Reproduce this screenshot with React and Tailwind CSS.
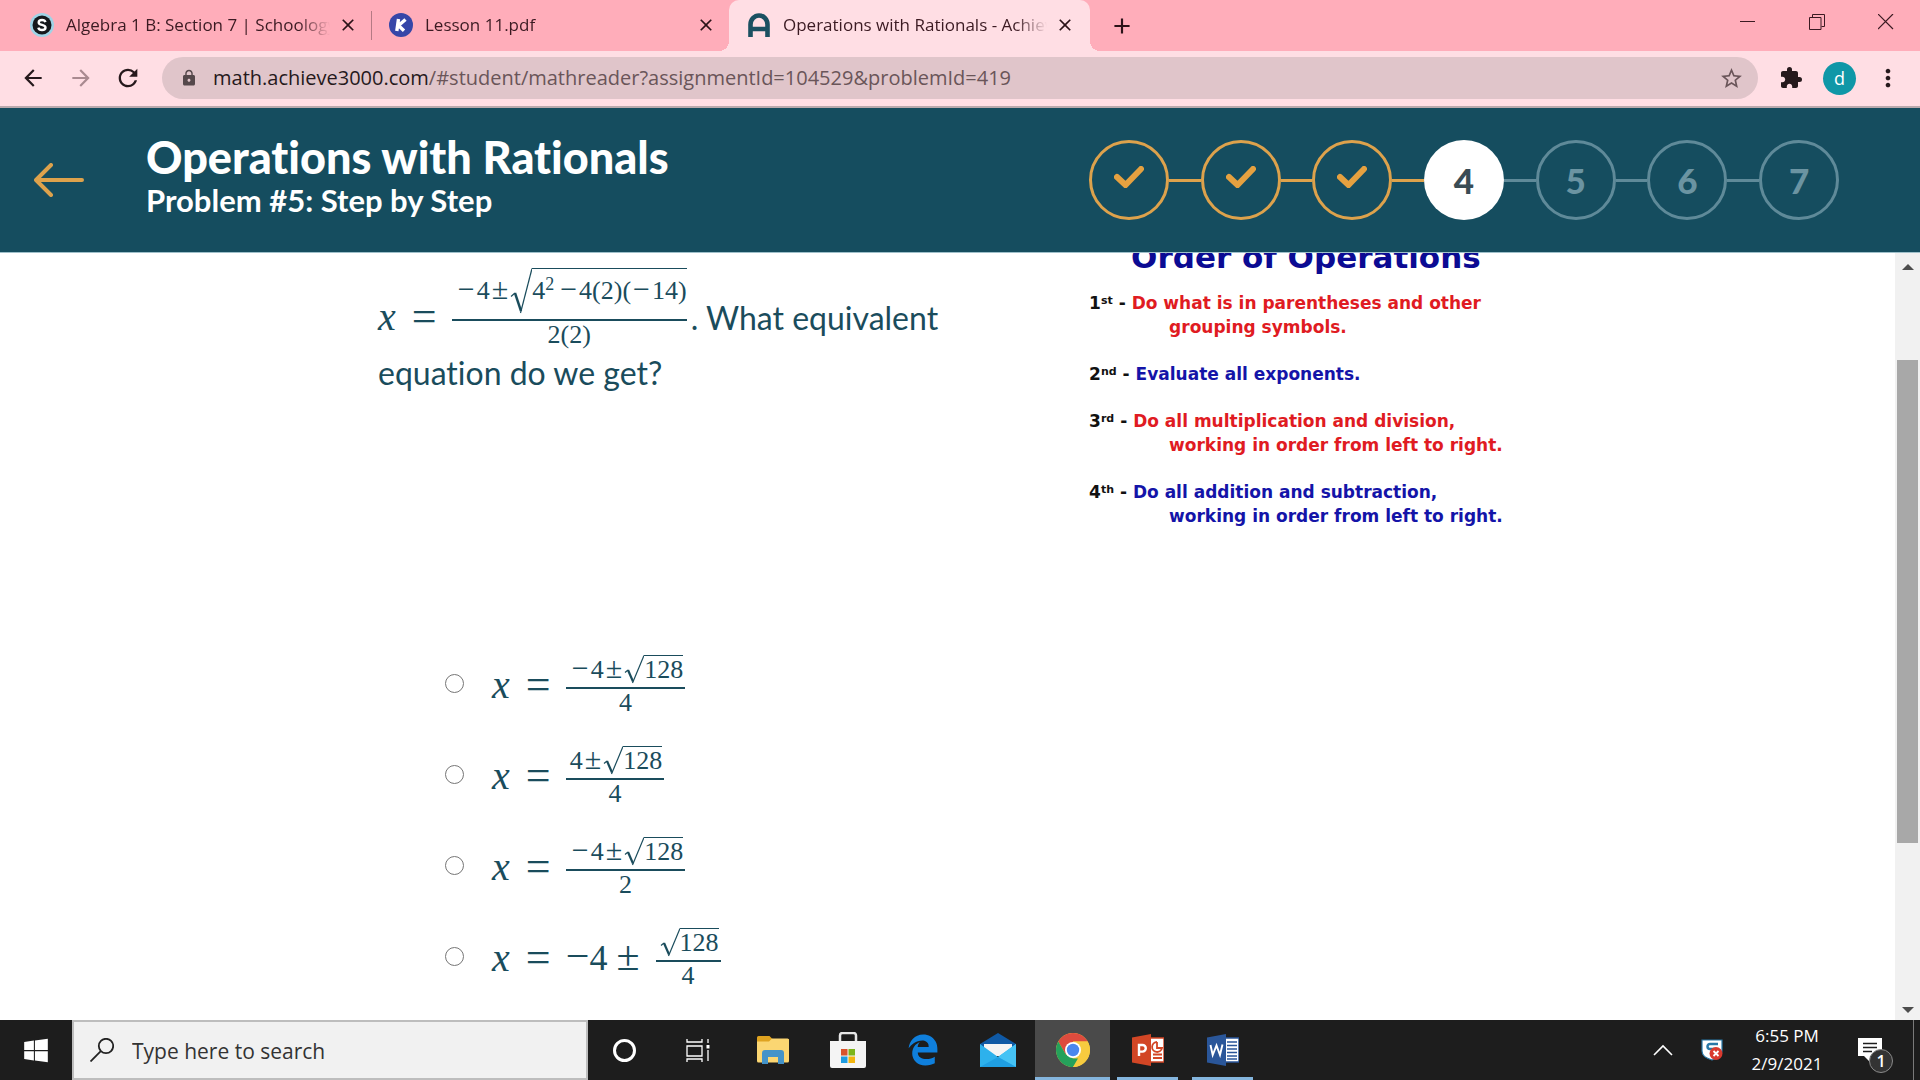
import React from 'react';
import {
  MdAdd,
  MdArrowBack,
  MdArrowForward,
  MdClose,
  MdExtension,
  MdLock,
  MdMoreVert,
  MdRefresh,
  MdStarBorder,
} from 'react-icons/md';
import { FaEdgeLegacy, FaWindows } from 'react-icons/fa6';

/* ---------- Browser window ---------- */

function SchoologyIcon() {
  return (
    <svg viewBox="0 0 24 24" className="w-6 h-6 shrink-0">
      <circle cx="12" cy="12" r="12" fill="#9fd3e6" />
      <circle cx="12" cy="12" r="9.5" fill="#15181c" />
      <path d="M15.5 9.2C15 7.600 13.700 7 12 7c-2 0-3.300.9-3.300 2.400 0 3.200 6.800 1.700 6.800 5 0 1.600-1.500 2.600-3.500 2.600-1.900 0-3.200-.8-3.700-2.400" fill="none" stroke="#fff" strokeWidth="2.400" />
    </svg>
  );
}

function KamiIcon() {
  return (
    <svg viewBox="0 0 24 24" className="w-6 h-6 shrink-0">
      <circle cx="12" cy="12" r="12" fill="#3646a8" />
      <path d="M9.500 6 7.800 18M16.500 6.500 9.500 12.500l5.500 5.200" fill="none" stroke="#fff" strokeWidth="3.400" />
    </svg>
  );
}

function AchieveIcon() {
  return (
    <svg viewBox="0 0 24 24" className="w-6 h-6 shrink-0">
      <path d="M3.500 24V11.500a8.500 9 0 0 1 17 0V24M3.500 16h17" fill="none" stroke="#1b5061" strokeWidth="4.600" />
    </svg>
  );
}

function Tab({ icon, title, className }) {
  return (
    <div className={`flex items-center h-full pb-px text-[17px] text-[#3b1a22] ${className}`}>
      {icon}
      <span className="flex-1 ml-3 overflow-hidden whitespace-nowrap [mask-image:linear-gradient(to_right,black_88%,transparent)]">
        {title}
      </span>
      <button aria-label="Close tab" className="ml-2 text-[#2b1218]">
        <MdClose className="w-5 h-5" />
      </button>
    </div>
  );
}

function TabStrip() {
  return (
    <div className="flex items-stretch h-[51px] bg-[#ffadba]">
      <Tab icon={<SchoologyIcon />} title="Algebra 1 B: Section 7 | Schoology" className="w-[371px] pl-[30px] pr-[13px]" />
      <div className="w-px my-[11px] bg-[#b57a84]" />
      <Tab icon={<KamiIcon />} title="Lesson 11.pdf" className="w-[357px] pl-[17px] pr-[13px]" />
      <div className="relative w-[361px] bg-[#ffdee4] rounded-t-[10px]">
        <span className="absolute bottom-0 -left-[10px] w-[10px] h-[10px] bg-[radial-gradient(circle_at_0_0,transparent_10px,#ffdee4_10px)]" />
        <Tab icon={<AchieveIcon />} title="Operations with Rationals - Achieve3000" className="pl-[18px] pr-[15px]" />
        <span className="absolute bottom-0 -right-[10px] w-[10px] h-[10px] bg-[radial-gradient(circle_at_100%_0,transparent_10px,#ffdee4_10px)]" />
      </div>
      <button aria-label="New tab" className="ml-[19px] text-[#2b1218]">
        <MdAdd className="w-[26px] h-[26px]" />
      </button>
      <div className="flex items-center gap-[53px] ml-auto mr-[26px] pb-2 text-[#3b1a22]">
        <button aria-label="Minimize">
          <svg viewBox="0 0 16 16" className="w-4 h-4"><path d="M0 7.500h15" stroke="currentColor" /></svg>
        </button>
        <button aria-label="Restore">
          <svg viewBox="0 0 16 16" className="w-4 h-4"><path d="M.5 3.500h11.500v12H.5zM3.500 3V.500h12v12H12.500" fill="none" stroke="currentColor" /></svg>
        </button>
        <button aria-label="Close">
          <svg viewBox="0 0 16 16" className="w-4 h-4"><path d="m0 0 15 15M15 0 0 15" stroke="currentColor" strokeWidth="1.200" /></svg>
        </button>
      </div>
    </div>
  );
}

function Toolbar() {
  return (
    <div className="flex items-center h-[57px] pb-px pl-5 pr-[18px] bg-[#ffdee4] border-b-2 border-[#b9a9ad] text-[#26191c]">
      <button aria-label="Back"><MdArrowBack className="w-[26px] h-[26px]" /></button>
      <button aria-label="Forward" className="ml-[22px] text-[#a98a90]"><MdArrowForward className="w-[26px] h-[26px]" /></button>
      <button aria-label="Reload" className="ml-5"><MdRefresh className="w-7 h-7" /></button>
      <div className="flex items-center flex-1 h-[42px] ml-5 pl-[18px] pr-[14px] rounded-full bg-[#e0c5ca]">
        <MdLock className="w-[18px] h-[18px] text-[#55484b]" />
        <div className="ml-[15px] text-[20px] text-[#6a5559] whitespace-nowrap">
          <span className="text-[#26191c]">math.achieve3000.com</span>/#student/mathreader?assignmentId=104529&amp;problemId=419
        </div>
        <button aria-label="Bookmark this page" className="ml-auto text-[#6a5559]"><MdStarBorder className="w-[25px] h-[25px]" /></button>
      </div>
      <button aria-label="Extensions" className="ml-[21px]"><MdExtension className="w-6 h-6" /></button>
      <button className="flex items-center justify-center w-[33px] h-[33px] ml-5 rounded-full bg-[#0f97a7] text-white text-lg">d</button>
      <button aria-label="Menu" className="ml-[18px]"><MdMoreVert className="w-7 h-7" /></button>
    </div>
  );
}

/* ---------- Lesson header ---------- */

const steps = [
  { id: 1, state: 'done' },
  { id: 2, state: 'done' },
  { id: 3, state: 'done' },
  { id: 4, state: 'current' },
  { id: 5, state: 'todo' },
  { id: 6, state: 'todo' },
  { id: 7, state: 'todo' },
];

const stepStyles = {
  done: 'border-[3px] border-[#dda24c] text-[#e5a140]',
  current: 'bg-white text-[#3a4c55]',
  todo: 'border-[3px] border-[#5f8a99] text-[#6b94a2]',
};

function CheckIcon() {
  return (
    <svg viewBox="0 0 30 22" className="w-[30px] h-[22px] mb-1.5">
      <path d="m3 11 8.500 8L27 3" fill="none" stroke="currentColor" strokeWidth="6" strokeLinejoin="miter" strokeLinecap="round" />
    </svg>
  );
}

function LessonHeader() {
  return (
    <header className="flex items-center h-[145px] pl-[34px] pr-[81px] bg-[#154d5f] border-b border-[#9fc0ca] font-[Lato,sans-serif] [font-variant-ligatures:none] font-bold text-white">
      <button aria-label="Back to lesson" className="text-[#dda24c]">
        <svg viewBox="0 0 50 34" className="w-[50px] h-[34px]">
          <path d="M17 2 2 17l15 15M3 17h45" fill="none" stroke="currentColor" strokeWidth="4" strokeLinecap="round" strokeLinejoin="round" />
        </svg>
      </button>
      <div className="ml-[62px] pb-1.5">
        <h1 className="text-[45px] leading-[46px] font-black">Operations with Rationals</h1>
        <h2 className="text-[31px] leading-10">Problem #5: Step by Step</h2>
      </div>
      <ol className="flex items-center w-[750px] ml-auto text-[35px] font-black">
        {steps.map((step, i) => (
          <React.Fragment key={step.id}>
            {i > 0 && (
              <li aria-hidden="true" className={`flex-1 h-[3px] ${i <= 3 ? 'bg-[#dda24c]' : 'bg-[#5f8a99]'}`} />
            )}
            <li className={`flex items-center justify-center w-20 h-20 rounded-full ${stepStyles[step.state]}`}>
              {step.state === 'done' ? <CheckIcon /> : step.id}
            </li>
          </React.Fragment>
        ))}
      </ol>
    </header>
  );
}

/* ---------- Math ---------- */

function Root({ tall, children }) {
  return (
    <span className="flex">
      {tall ? (
        <svg viewBox="0 0 22 46" className="w-[22px] h-[46px] shrink-0">
          <path d="M1 28.500 5 25" fill="none" stroke="currentColor" strokeWidth="1.200" />
          <path d="m5 25 6 18" fill="none" stroke="currentColor" strokeWidth="2.400" />
          <path d="M10.500 45 22 .5" fill="none" stroke="currentColor" strokeWidth="1.200" />
        </svg>
      ) : (
        <svg viewBox="0 0 20 29" className="w-5 h-[29px] shrink-0">
          <path d="M1 17.500 4 15" fill="none" stroke="currentColor" strokeWidth="1.200" />
          <path d="m4 15 5 11.500" fill="none" stroke="currentColor" strokeWidth="2.200" />
          <path d="M8.500 28 20 .5" fill="none" stroke="currentColor" strokeWidth="1.200" />
        </svg>
      )}
      <span className={`self-baseline border-t border-current ${tall ? 'pt-2' : ''}`}>{children}</span>
    </span>
  );
}

function Fraction({ top, bottom, tall }) {
  return (
    <span className="flex flex-col text-[26px] leading-7">
      <span className={`flex items-baseline pl-1 ${tall ? 'pb-[5px]' : 'pb-[3px] pr-0.5'}`}>{top}</span>
      <span className="h-[2px] bg-current" />
      <span className="text-center">{bottom}</span>
    </span>
  );
}

function Equation({ children }) {
  return (
    <span className="flex items-end gap-4 font-['Liberation_Serif',serif] text-[36px] leading-10">
      <i className="mb-3 text-[40px]">x</i>
      <span className="w-6 mb-3 text-center text-[44px]">=</span>
      {children}
    </span>
  );
}

// Operators inside a fraction are set slightly larger than the digits
function Op({ children }) {
  return <span className="px-0.5 text-[30px] leading-6">{children}</span>;
}

/* ---------- Problem ---------- */

const options = [
  {
    id: 'a',
    body: <Fraction top={<><Op>−</Op>4<Op>±</Op><Root>128</Root></>} bottom="4" />,
  },
  {
    id: 'b',
    body: <Fraction top={<>4<Op>±</Op><Root>128</Root></>} bottom="4" />,
  },
  {
    id: 'c',
    body: <Fraction top={<><Op>−</Op>4<Op>±</Op><Root>128</Root></>} bottom="2" />,
  },
  {
    id: 'd',
    body: (
      <>
        <span className="mb-3">
          <span className="text-[42px] leading-9">−</span>4 <span className="text-[42px] leading-9">±</span>
        </span>
        <Fraction top={<Root>128</Root>} bottom="4" />
      </>
    ),
  },
];

function Question() {
  return (
    <section className="pt-[15px] text-[#1a4c5c]">
      <div className="font-[Lato,sans-serif] [font-variant-ligatures:none] text-[32px] leading-10">
        <div className="flex items-end">
          <Equation>
            <Fraction
              tall
              top={
                <>
                  <Op>−</Op>4<Op>±</Op>
                  <Root tall>
                    4<sup className="text-[18px]">2</sup>
                    <span className="ml-1"><Op>−</Op></span>4(2)(<Op>−</Op>14)
                  </Root>
                </>
              }
              bottom="2(2)"
            />
          </Equation>
          <span className="ml-1 mb-[11px]">. What equivalent</span>
        </div>
        <p className="mt-1">equation do we get?</p>
      </div>
      <div className="flex flex-col gap-[29px] mt-[262px] pl-[67px]">
        {options.map((option) => (
          <label key={option.id} className="flex items-center gap-7">
            <input type="radio" name="answer" value={option.id} className="w-[19px] h-[19px] mb-1.5 appearance-none rounded-full border border-[#767676] bg-white" />
            <Equation>{option.body}</Equation>
          </label>
        ))}
      </div>
    </section>
  );
}

const rules = [
  { n: '1', suffix: 'st', color: 'text-[#e01b22]', first: 'Do what is in parentheses and other', second: 'grouping symbols.' },
  { n: '2', suffix: 'nd', color: 'text-[#1414a8]', first: 'Evaluate all exponents.' },
  { n: '3', suffix: 'rd', color: 'text-[#e01b22]', first: 'Do all multiplication and division,', second: 'working in order from left to right.' },
  { n: '4', suffix: 'th', color: 'text-[#1414a8]', first: 'Do all addition and subtraction,', second: 'working in order from left to right.' },
];

function OrderOfOperations() {
  return (
    <aside className="-mt-3 font-['DejaVu_Sans',sans-serif] font-bold whitespace-nowrap">
      <h3 className="pl-[42px] text-[31px] leading-8 text-[#0b0b93]">Order of Operations</h3>
      <ul className="flex flex-col gap-[23px] mt-[18px] text-[17px] leading-6">
        {rules.map((rule) => (
          <li key={rule.n}>
            <span className="text-[#111]">
              {rule.n}
              <sup className="text-[11px]">{rule.suffix}</sup> -{' '}
            </span>
            <span className={rule.color}>{rule.first}</span>
            {rule.second && <div className={`pl-20 ${rule.color}`}>{rule.second}</div>}
          </li>
        ))}
      </ul>
    </aside>
  );
}

function Scrollbar() {
  return (
    <div className="flex flex-col items-center w-[25px] pt-2 pb-1 bg-[#f1f1f1] text-[#4d4d4d]">
      <svg viewBox="0 0 12 12" className="w-3 h-3"><path d="m0 9 6-6 6 6z" fill="currentColor" /></svg>
      <div className="flex flex-col items-center flex-1 w-full pt-[87px]">
        <div className="w-[21px] h-3/4 bg-[#a8a8a8]" />
      </div>
      <svg viewBox="0 0 12 12" className="w-3 h-3"><path d="m0 3 6 6 6-6z" fill="currentColor" /></svg>
    </div>
  );
}

/* ---------- Taskbar ---------- */

function TaskViewIcon() {
  return (
    <svg viewBox="0 0 24 24" className="w-6 h-6" fill="none" stroke="#fff" strokeWidth="1.300">
      <path d="M1 1v3h15V1M1 8h15v10H1zM1 24v-3h15v3M22 1v4M22 12v11" />
      <path d="M20.500 7h3v3.500h-3z" fill="#fff" stroke="none" />
    </svg>
  );
}

function ExplorerIcon() {
  return (
    <svg viewBox="0 0 32 28" className="w-8 h-7">
      <path d="M0 1.500A1.500 1.500 0 0 1 1.500 0h11l3 3H32v6H0z" fill="#dfa320" />
      <path d="M0 5.500h12l3-3h15.500A1.500 1.500 0 0 1 32 4v21a1.500 1.500 0 0 1-1.500 1.500h-29A1.500 1.500 0 0 1 0 25z" fill="#fbd672" />
      <path d="M5 28V17a3 3 0 0 1 3-3h16a3 3 0 0 1 3 3v11h-6v-7H11v7z" fill="#4493c9" />
    </svg>
  );
}

function StoreIcon() {
  return (
    <svg viewBox="0 0 36 36" className="w-9 h-9">
      <path d="M10 10V3.500A2.500 2.500 0 0 1 12.500 1h11A2.500 2.500 0 0 1 26 3.500V10" fill="none" stroke="#e8e8e8" strokeWidth="2.500" />
      <path d="M0 9h36v25a2 2 0 0 1-2 2H2a2 2 0 0 1-2-2z" fill="#f4f4f4" />
      <path d="M11 17h6.500v6.500H11z" fill="#d9532c" />
      <path d="M18.500 17H25v6.500h-6.500z" fill="#7cb51a" />
      <path d="M11 24.500h6.500V31H11z" fill="#1e9be0" />
      <path d="M18.500 24.500H25V31h-6.500z" fill="#f2b50f" />
    </svg>
  );
}

function MailIcon() {
  return (
    <svg viewBox="0 0 36 34" className="w-9 h-[34px]">
      <path d="M0 11 18 0l18 11v6H0z" fill="#0f59a5" />
      <path d="M4 11h28v12H4z" fill="#f4f4f4" />
      <path d="m0 11 18 13 18-13v23H0z" fill="#2db1ec" />
      <path d="M36 11 18 24l18 10z" fill="#45c3f5" />
      <path d="m18 24 18 10H0z" fill="#1f9fe2" />
    </svg>
  );
}

function ChromeIcon() {
  return (
    <svg viewBox="0 0 34 34" className="w-[34px] h-[34px]">
      <circle cx="17" cy="17" r="17" fill="#f7cb3f" />
      <path d="M17 17 9.600 21.200 2.300 8.500A17 17 0 0 1 31.700 8.500H17z" fill="#dd4b3e" />
      <path d="M2.300 8.500 9.700 21.200 17 25.500h7.300L17 34A17 17 0 0 1 2.300 8.500z" fill="#25a15b" />
      <path d="M24.400 21.200 17 34A17 17 0 0 0 31.700 8.500H17z" fill="#f7cb3f" />
      <circle cx="17" cy="17" r="8" fill="#fff" />
      <circle cx="17" cy="17" r="6.200" fill="#4a87ee" />
    </svg>
  );
}

function PowerPointIcon() {
  return (
    <svg viewBox="0 0 32 32" className="w-8 h-8">
      <path d="M18 4h14v24H18z" fill="#fff" stroke="#d24625" strokeWidth="1.500" />
      <path d="M25 8v6h5a5 5 0 1 1-5-6M21 20.500h9M21 24h9" fill="none" stroke="#d24625" strokeWidth="1.800" />
      <path d="M0 3.500 19 0v32L0 28.500z" fill="#d24625" />
      <path d="M7 22V11h3.500a3.200 3.200 0 0 1 0 6.600H7" fill="none" stroke="#fff" strokeWidth="2.400" />
    </svg>
  );
}

function WordIcon() {
  return (
    <svg viewBox="0 0 32 32" className="w-8 h-8">
      <path d="M18 4h14v24H18z" fill="#fff" stroke="#2a5699" strokeWidth="1.500" />
      <path d="M20 8h10M20 11.500h10M20 15h10M20 18.500h10M20 22h10M20 25h10" stroke="#2a5699" strokeWidth="1.500" />
      <path d="M0 3.500 19 0v32L0 28.500z" fill="#2a5699" />
      <path d="m3.500 11 2.200 10L9.500 11.500 13 21l2.500-10.500" fill="none" stroke="#fff" strokeWidth="1.900" />
    </svg>
  );
}

const apps = [
  { name: 'Task View', icon: <TaskViewIcon /> },
  { name: 'File Explorer', icon: <ExplorerIcon /> },
  { name: 'Microsoft Store', icon: <StoreIcon /> },
  { name: 'Microsoft Edge', icon: <FaEdgeLegacy className="w-8 h-8 text-[#0f7fdc]" /> },
  { name: 'Mail', icon: <MailIcon /> },
  { name: 'Google Chrome', icon: <ChromeIcon />, active: true },
  { name: 'PowerPoint', icon: <PowerPointIcon />, open: true },
  { name: 'Word', icon: <WordIcon />, open: true },
];

function Taskbar() {
  return (
    <footer className="flex h-[60px] bg-[#1d1d1d] text-white">
      <button aria-label="Start" className="flex items-center justify-center w-[72px]">
        <FaWindows className="w-6 h-[27px]" />
      </button>
      <label className="flex items-center w-[516px] pl-4 bg-[#f1f1f1] border-2 border-[#bdbdbd]">
        <svg viewBox="0 0 24 24" className="w-6 h-6" fill="none" stroke="#222" strokeWidth="1.800">
          <circle cx="16" cy="8" r="7.200" />
          <path d="M10.800 13.200.5 23.500" />
        </svg>
        <input type="text" aria-label="Search" placeholder="Type here to search" className="flex-1 ml-[18px] pt-1 text-[21px] outline-none placeholder:text-[#333]" />
      </label>
      <button aria-label="Cortana" className="flex items-center justify-center w-[72px]">
        <span className="w-[23px] h-[23px] rounded-full border-[3px] border-white" />
      </button>
      {apps.map((app) => (
        <button
          key={app.name}
          aria-label={app.name}
          className={`relative flex items-center justify-center w-[75px] ${app.active ? 'bg-[#4a4a4a]' : ''}`}
        >
          {app.icon}
          {app.active && <span className="absolute bottom-0 inset-x-0 h-[3px] bg-[#84b5dd]" />}
          {app.open && <span className="absolute bottom-0 inset-x-[7px] h-[3px] bg-[#84b5dd]" />}
        </button>
      ))}
      <div className="flex items-center ml-auto">
        <button aria-label="Show hidden icons">
          <svg viewBox="0 0 20 12" className="w-5 h-3"><path d="m1 11 9-9 9 9" fill="none" stroke="#fff" strokeWidth="1.600" /></svg>
        </button>
        <svg viewBox="0 0 24 24" className="w-6 h-6 ml-7">
          <path d="M1 2h20v11c0 5-4 7-10 9-6-2-10-4-10-9z" fill="#fff" stroke="#2878a8" strokeWidth="1.200" />
          <path d="M17 6H9a2 2 0 0 0 0 5h6" fill="none" stroke="#2878a8" strokeWidth="2.500" />
          <circle cx="15" cy="15.500" r="6.500" fill="#d93a2f" />
          <path d="m12.500 13 5 5M17.500 13l-5 5" stroke="#fff" strokeWidth="1.800" />
        </svg>
        <div className="w-[80px] ml-[22px] text-center text-[17px] leading-7">
          <div>6:55 PM</div>
          <div>2/9/2021</div>
        </div>
        <button aria-label="Notifications" className="relative ml-[31px] mr-[31px]">
          <svg viewBox="0 0 24 24" className="w-6 h-6">
            <path d="M0 0h24v18H12l0 6-6-6H0z" fill="#fff" />
            <path d="M5 5.500h14M5 9.500h14M5 13.500h9" stroke="#1d1d1d" strokeWidth="1.300" />
          </svg>
          <span className="absolute left-[11px] top-[11px] flex items-center justify-center w-6 h-6 rounded-full border border-[#8a8a8a] bg-[#333] text-base font-semibold">1</span>
        </button>
        <div className="w-px h-[60px] mr-1.5 bg-[#7a7a7a]" />
      </div>
    </footer>
  );
}

function App() {
  return (
    <div className="flex flex-col h-screen bg-white font-['Open_Sans',sans-serif]">
      <TabStrip />
      <Toolbar />
      <LessonHeader />
      <main className="flex flex-1 min-h-0 overflow-hidden">
        <div className="grid grid-cols-[15fr_17fr] flex-1 pl-[378px]">
          <Question />
          <OrderOfOperations />
        </div>
        <Scrollbar />
      </main>
      <Taskbar />
    </div>
  );
}

export default App;
